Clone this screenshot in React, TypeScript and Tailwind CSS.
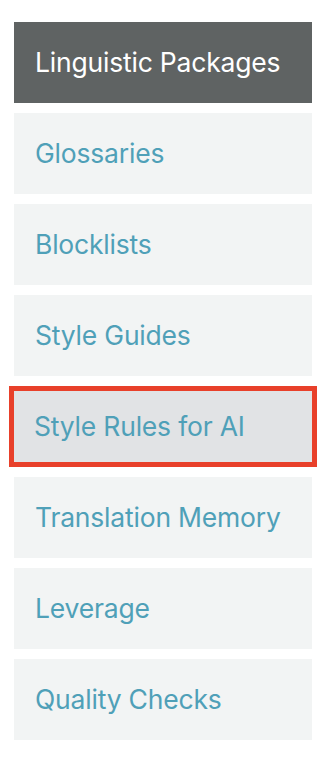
import React from 'react';

const items = [
    'Glossaries',
    'Blocklists',
    'Style Guides',
    'Style Rules for AI',
    'Translation Memory',
    'Leverage',
    'Quality Checks',
];

const selected = 'Style Rules for AI';

export default function App() {
    return (
        <div className="w-[326px] h-[760px] bg-white pt-[22px] px-[14px] flex flex-col gap-[10px]" style={{ fontFamily: 'Inter, "Noto Sans", sans-serif' }}>
            <div className="h-[81px] bg-[#5f6363] flex items-center pl-[21px] text-white text-[26.5px] tracking-[-0.2px]">
                Linguistic Packages
            </div>
            {items.map((name) => (
                name === selected ? (
                    <div
                        key={name}
                        className="h-[81px] -mx-[5px] border-[5px] border-[#e8402a] bg-[#e1e3e5] flex items-center pl-[20px] text-[#4fa0b8] text-[26.5px] tracking-[-0.2px]"
                    >
                        {name}
                    </div>
                ) : (
                    <div
                        key={name}
                        className="h-[81px] bg-[#f2f4f4] flex items-center pl-[21px] text-[#4fa0b8] text-[26.5px] tracking-[-0.2px]"
                    >
                        {name}
                    </div>
                )
            ))}
        </div>
    );
}
